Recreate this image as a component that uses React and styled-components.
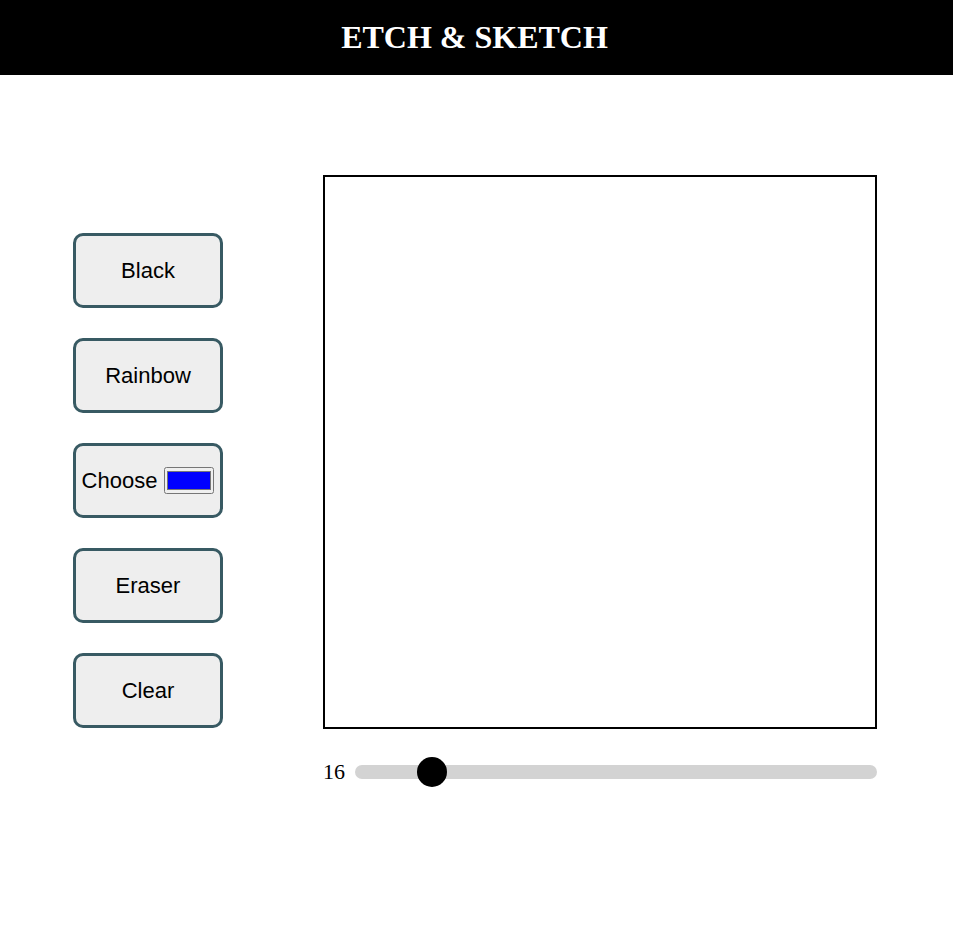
import { useState } from "react";
import styled, { createGlobalStyle } from "styled-components";

const modes = ["Black", "Rainbow", "Choose", "Eraser", "Clear"];

const App = () => {
  const [size, setSize] = useState(16);
  const [color, setColor] = useState("#0000ff");

  return (
    <>
      <GlobalStyle />
      <Header>
        <Title>ETCH &amp; SKETCH</Title>
      </Header>
      <Main>
        <Sidebar>
          {modes.map((m) => (
            <ModeButton key={m}>
              {m}
              {m === "Choose" && (
                <ColorInput
                  type="color"
                  value={color}
                  onChange={(e) => setColor(e.target.value)}
                />
              )}
            </ModeButton>
          ))}
        </Sidebar>
        <BoardColumn>
          <Board />
          <SliderRow>
            <SizeLabel>{size}</SizeLabel>
            <Slider
              type="range"
              min="0"
              max="128"
              value={size}
              onChange={(e) => setSize(Number(e.target.value))}
            />
          </SliderRow>
        </BoardColumn>
      </Main>
    </>
  );
};

export default App;

const GlobalStyle = createGlobalStyle`
  body {
    margin: 0;
    font-family: "Liberation Serif", "Times New Roman", serif;
    background: #fff;
  }
`;

const Header = styled.header`
  height: 75px;
  background: #000;
  display: flex;
  align-items: center;
  justify-content: center;
  padding-right: 4px;
`;

const Title = styled.h1`
  margin: 0 0 1px;
  color: #fff;
  font-size: 32px;
  font-weight: bold;
  font-family: "Liberation Serif", "Times New Roman", serif;
`;

const Main = styled.main`
  display: flex;
  justify-content: center;
  align-items: center;
  gap: 100px;
  padding-top: 100px;
  padding-right: 3px;
`;

const Sidebar = styled.div`
  display: flex;
  flex-direction: column;
  gap: 30px;
  margin-bottom: 2px;
`;

const ModeButton = styled.button`
  width: 150px;
  height: 75px;
  box-sizing: border-box;
  display: flex;
  align-items: center;
  justify-content: center;
  gap: 7px;
  padding: 1px 0 0;
  background: #eeeeee;
  border: 3px solid #385a63;
  border-radius: 10px;
  font-family: "Liberation Sans", Arial, sans-serif;
  font-size: 22px;
  color: #000;
  cursor: pointer;
`;

const ColorInput = styled.input`
  width: 50px;
  height: 27px;
  margin: 0;
  padding: 1px;
  box-sizing: border-box;

  &::-webkit-color-swatch-wrapper {
    padding: 2px 1px;
  }

  &::-webkit-color-swatch {
    border: 1px solid #777;
  }
`;

const BoardColumn = styled.div`
  display: flex;
  flex-direction: column;
  gap: 28px;
`;

const Board = styled.div`
  width: 550px;
  height: 550px;
  border: 2px solid #000;
  background: #fff;
`;

const SliderRow = styled.div`
  display: flex;
  align-items: center;
  gap: 10px;
  height: 30px;
`;

const SizeLabel = styled.span`
  font-size: 22px;
  color: #000;
  width: 22px;
`;

const Slider = styled.input`
  -webkit-appearance: none;
  appearance: none;
  flex: 1;
  height: 14px;
  margin: 0;
  border-radius: 7px;
  background: #d3d3d3;
  outline: none;

  &::-webkit-slider-thumb {
    -webkit-appearance: none;
    appearance: none;
    width: 30px;
    height: 30px;
    border-radius: 50%;
    background: #000;
    cursor: pointer;
  }
`;
